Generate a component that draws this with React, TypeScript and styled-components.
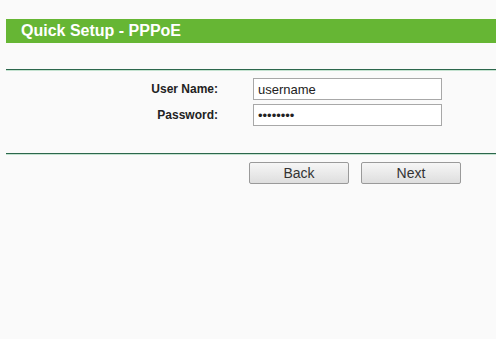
import styled, { createGlobalStyle } from "styled-components";

const GlobalStyle = createGlobalStyle`
  html, body {
    margin: 0;
    padding: 0;
    background: #fafafa;
    font-family: "Liberation Sans", Arial, sans-serif;
  }
`;

const Page = styled.div`
  width: 496px;
  height: 339px;
  padding: 19px 0 0 6px;
  box-sizing: border-box;
  background: #fafafa;
  overflow: hidden;
`;

const TitleBar = styled.div`
  height: 24px;
  background: #66b634;
  color: white;
  font-size: 16px;
  font-weight: 700;
  line-height: 24px;
  padding-left: 15px;
`;

const Divider = styled.div<{ $top: number }>`
  margin-top: ${(p) => p.$top}px;
  height: 1px;
  background: #2c674c;
  border-bottom: 1px solid #c4e2d0;
`;

const Form = styled.div`
  display: grid;
  grid-template-columns: 212px 189px;
  column-gap: 35px;
  row-gap: 4px;
  align-items: center;
  margin-top: 7px;
`;

const Label = styled.label`
  text-align: right;
  font-size: 12px;
  font-weight: 700;
  color: #222;
`;

const Input = styled.input`
  width: 189px;
  height: 22px;
  box-sizing: border-box;
  border: 1px solid #a8a8a8;
  background: #fff;
  padding: 0 4px;
  font-family: "Liberation Sans", Arial, sans-serif;
  font-size: 13px;
  color: #222;
  outline: none;
`;

const Buttons = styled.div`
  display: flex;
  gap: 12px;
  margin: 7px 0 0 243px;
`;

const Button = styled.button`
  width: 100px;
  height: 22px;
  box-sizing: border-box;
  border: 1px solid #9a9a9a;
  border-radius: 2px;
  background: linear-gradient(#f6f6f6, #dedede);
  font-family: "Liberation Sans", Arial, sans-serif;
  font-size: 14px;
  line-height: 20px;
  color: #333;
  padding: 0;
  cursor: pointer;
`;

const App = () => {
  return (
    <>
      <GlobalStyle />
      <Page>
        <TitleBar>Quick Setup - PPPoE</TitleBar>
        <Divider $top={26} />
        <Form>
          <Label>User Name:</Label>
          <Input type="text" defaultValue="username" />
          <Label>Password:</Label>
          <Input type="password" defaultValue="password" />
        </Form>
        <Divider $top={27} />
        <Buttons>
          <Button>Back</Button>
          <Button>Next</Button>
        </Buttons>
      </Page>
    </>
  );
};

export default App;
